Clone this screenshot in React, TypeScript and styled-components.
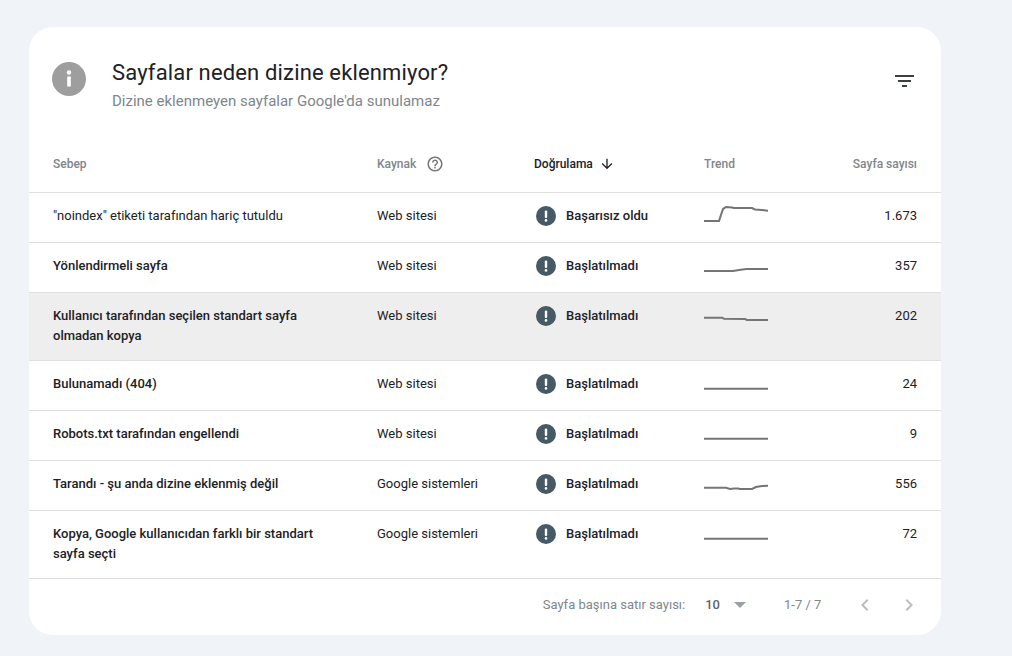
import React from "react";
import styled, { createGlobalStyle } from "styled-components";

const Global = createGlobalStyle`
  html, body { margin: 0; padding: 0; background: #f0f4f9; }
  body { font-family: Roboto, "Noto Sans", sans-serif; width: 1012px; height: 656px; overflow: hidden; }
`;

const Page = styled.div`
  padding: 27px 71px 21px 29px;
`;
const Card = styled.section`
  width: 912px;
  height: 608px;
  background: #fff;
  border-radius: 24px;
  display: flex;
  flex-direction: column;
`;
const Header = styled.header`
  display: flex;
  height: 113px;
  padding: 35px 25px 0 23px;
  box-sizing: border-box;
`;
const InfoBadge = styled.div`
  width: 34px;
  height: 34px;
  flex: none;
  line-height: 0;
`;
const Titles = styled.div`
  margin-left: 26px;
  flex: 1;
`;
const Title = styled.h1`
  margin: 0;
  font-size: 22px;
  font-weight: 400;
  line-height: 22px;
  letter-spacing: 0.15px;
  color: #202124;
`;
const Subtitle = styled.p`
  margin: 7px 0 0;
  font-size: 15px;
  line-height: 20px;
  color: #80868b;
`;
const FilterButton = styled.div`
  width: 24px;
  height: 24px;
  margin: 7px 0 0;
  line-height: 0;
`;
const Columns = "324px 157px 170px 64px 1fr";
const HeadRow = styled.div`
  display: grid;
  grid-template-columns: ${Columns};
  align-items: center;
  height: 47px;
  padding: 0 24px 5px 24px;
  border-bottom: 1px solid #e0e0e0;
  font-size: 12px;
  font-weight: 500;
  color: #80868b;
`;
const HeadCell = styled.div<{ $active?: boolean; $right?: boolean }>`
  display: flex;
  align-items: center;
  justify-content: ${(p) => (p.$right ? "flex-end" : "flex-start")};
  color: ${(p) => (p.$active ? "#202124" : "#80868b")};
  min-width: 0;
  white-space: nowrap;
  line-height: 16px;
`;
const HeadIcon = styled.span<{ $gap: number }>`
  display: inline-flex;
  margin-left: ${(p) => p.$gap}px;
`;
const Row = styled.div<{ $tall?: boolean; $hover?: boolean }>`
  display: grid;
  grid-template-columns: ${Columns};
  height: ${(p) => (p.$tall ? 54 : 36)}px;
  padding: 13px 24px 0;
  border-bottom: 1px solid #e0e0e0;
  background: ${(p) => (p.$hover ? "#eeeeee" : "transparent")};
  font-size: 13px;
  line-height: 20px;
  color: #202124;
`;
const Reason = styled.div<{ $bold?: boolean }>`
  font-weight: ${(p) => (p.$bold ? 500 : 400)};
  padding-right: 30px;
`;
const Source = styled.div``;
const Status = styled.div`
  display: flex;
  align-items: flex-start;
  font-weight: 500;
`;
const StatusIcon = styled.span`
  width: 20px;
  height: 20px;
  margin: 0 10px 0 2px;
  line-height: 0;
`;
const Spark = styled.svg`
  display: block;
  margin-top: -1px;
`;
const Count = styled.div`
  text-align: right;
`;
const Footer = styled.footer`
  flex: 1;
  display: flex;
  align-items: center;
  justify-content: flex-end;
  font-size: 13px;
  color: #80868b;
  padding: 0 20px 5px 0;
`;
const PerPage = styled.span``;
const PerValue = styled.span`
  margin-left: 20px;
  font-weight: 500;
  color: #5f6368;
`;
const Caret = styled.span`
  margin-left: 14px;
  width: 0;
  height: 0;
  border-left: 6.5px solid transparent;
  border-right: 6.5px solid transparent;
  border-top: 6px solid #9aa0a6;
`;
const Range = styled.span`
  margin-left: 38px;
  width: 69px;
`;
const Pager = styled.div`
  display: flex;
  gap: 20px;
  line-height: 0;
`;

const Sparks: Record<string, string> = {
  a: "0,16 15,16 19,4 22,2 28,2.5 30,3 48,3 51,4.5 58,5 64,5.7",
  b: "0,16 29,16 35,15 42,14 64,14",
  c: "0,12.7 18,12.7 20,13.7 41,14 43,15 64,15",
  d: "0,15.7 64,15.7",
  e: "0,14.7 22,14.7 26,16 30,15.5 34,15.5 36,16 48,16 52,14 58,13 64,12.7",
};

const rows = [
  { reason: '"noindex" etiketi tarafından hariç tutuldu', src: "Web sitesi", status: "Başarısız oldu", spark: "a", n: "1.673" },
  { reason: "Yönlendirmeli sayfa", bold: true, src: "Web sitesi", status: "Başlatılmadı", spark: "b", n: "357" },
  { reason: "Kullanıcı tarafından seçilen standart sayfa olmadan kopya", bold: true, tall: true, hover: true, src: "Web sitesi", status: "Başlatılmadı", spark: "c", n: "202" },
  { reason: "Bulunamadı (404)", bold: true, src: "Web sitesi", status: "Başlatılmadı", spark: "d", n: "24" },
  { reason: "Robots.txt tarafından engellendi", bold: true, src: "Web sitesi", status: "Başlatılmadı", spark: "d", n: "9" },
  { reason: "Tarandı - şu anda dizine eklenmiş değil", bold: true, src: "Google sistemleri", status: "Başlatılmadı", spark: "e", n: "556" },
  { reason: "Kopya, Google kullanıcıdan farklı bir standart sayfa seçti", bold: true, tall: true, src: "Google sistemleri", status: "Başlatılmadı", spark: "d", n: "72" },
];

const Alert = () => (
  <svg width="20" height="20" viewBox="0 0 20 20">
    <circle cx="10" cy="10" r="10" fill="#455a64" />
    <rect x="8.8" y="4.5" width="2.4" height="7.5" rx="1" fill="#fff" />
    <circle cx="10" cy="14.4" r="1.3" fill="#fff" />
  </svg>
);

export default function App() {
  return (
    <>
      <Global />
      <Page>
        <Card>
          <Header>
            <InfoBadge>
              <svg width="34" height="34" viewBox="0 0 34 34">
                <circle cx="17" cy="17" r="17" fill="#9e9e9e" />
                <circle cx="17" cy="10.5" r="2.2" fill="#fff" />
                <rect x="15.2" y="14.5" width="3.6" height="10" fill="#fff" />
              </svg>
            </InfoBadge>
            <Titles>
              <Title>Sayfalar neden dizine eklenmiyor?</Title>
              <Subtitle>Dizine eklenmeyen sayfalar Google'da sunulamaz</Subtitle>
            </Titles>
            <FilterButton>
              <svg width="24" height="24" viewBox="0 0 24 24">
                <path d="M3 6h19v2H3zM6 11h13v2H6zM10 16h5v2h-5z" fill="#3c4043" />
              </svg>
            </FilterButton>
          </Header>
          <HeadRow>
            <HeadCell>Sebep</HeadCell>
            <HeadCell>
              Kaynak
              <HeadIcon $gap={10}>
                <svg width="18" height="18" viewBox="0 0 24 24" fill="#757575">
                  <path d="M11 18h2v-2h-2v2zm1-16C6.48 2 2 6.48 2 12s4.48 10 10 10 10-4.48 10-10S17.52 2 12 2zm0 18c-4.41 0-8-3.59-8-8s3.59-8 8-8 8 3.59 8 8-3.59 8-8 8zm0-14c-2.21 0-4 1.79-4 4h2c0-1.1.9-2 2-2s2 .9 2 2c0 2-3 1.75-3 5h2c0-2.25 3-2.5 3-5 0-2.21-1.79-4-4-4z" />
                </svg>
              </HeadIcon>
            </HeadCell>
            <HeadCell $active>
              Doğrulama
              <HeadIcon $gap={6}>
                <svg width="16" height="16" viewBox="0 0 24 24" fill="#202124">
                  <path d="M20 12l-1.41-1.41L13 16.17V4h-2v12.17l-5.58-5.59L4 12l8 8 8-8z" />
                </svg>
              </HeadIcon>
            </HeadCell>
            <HeadCell>Trend</HeadCell>
            <HeadCell $right>Sayfa sayısı</HeadCell>
          </HeadRow>
          {rows.map((r, i) => (
            <Row key={i} $tall={r.tall} $hover={r.hover}>
              <Reason $bold={r.bold}>{r.reason}</Reason>
              <Source>{r.src}</Source>
              <Status>
                <StatusIcon>
                  <Alert />
                </StatusIcon>
                {r.status}
              </Status>
              <Spark width="64" height="24" viewBox="0 0 64 24">
                <polyline points={Sparks[r.spark]} fill="none" stroke="#757575" strokeWidth="2" />
              </Spark>
              <Count>{r.n}</Count>
            </Row>
          ))}
          <Footer>
            <PerPage>Sayfa başına satır sayısı:</PerPage>
            <PerValue>10</PerValue>
            <Caret />
            <Range>1-7 / 7</Range>
            <Pager>
              <svg width="24" height="24" viewBox="0 0 24 24" fill="#bdbdbd">
                <path d="M15.41 7.41L14 6l-6 6 6 6 1.41-1.41L10.83 12z" />
              </svg>
              <svg width="24" height="24" viewBox="0 0 24 24" fill="#bdbdbd">
                <path d="M10 6L8.59 7.41 13.17 12l-4.58 4.59L10 18l6-6z" />
              </svg>
            </Pager>
          </Footer>
        </Card>
      </Page>
    </>
  );
}
